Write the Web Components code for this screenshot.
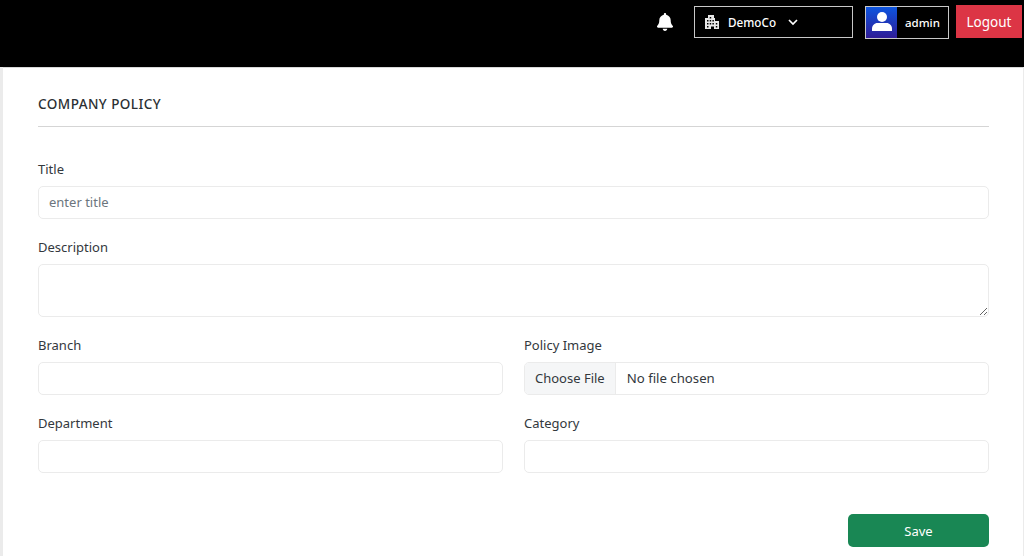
<!DOCTYPE html>
<html>
<head>
<meta charset="utf-8">
<title>Company Policy</title>
<style>
  html, body { margin: 0; height: 100%; overflow: hidden; }
  body { background: #ebebeb; font-family: "Noto Sans", "Open Sans", sans-serif; color: #212529; }
</style>
</head>
<body>
<app-shell>
  <top-bar slot="top">
    <notify-bell></notify-bell>
    <company-select>DemoCo</company-select>
    <user-chip>admin</user-chip>
    <logout-button>Logout</logout-button>
  </top-bar>
  <policy-card heading="COMPANY POLICY">
    <form-field label="Title" wide><text-box placeholder="enter title"></text-box></form-field>
    <form-field label="Description" wide><text-box multiline></text-box></form-field>
    <form-field label="Branch"><text-box></text-box></form-field>
    <form-field label="Policy Image"><file-box></file-box></form-field>
    <form-field label="Department"><text-box></text-box></form-field>
    <form-field label="Category"><text-box></text-box></form-field>
    <save-button slot="actions">Save</save-button>
  </policy-card>
</app-shell>

<script>
// small helper, every element has the same shadow setup
class Base extends HTMLElement {
  constructor() {
    super();
    this.attachShadow({ mode: 'open' });
  }
  connectedCallback() {
    this.shadowRoot.innerHTML = this.render();
  }
}

class AppShell extends Base {
  render() {
    return `
      <style>
        :host { display: flex; flex-direction: column; height: 556px; }
        main { flex: 1; padding: 0 1px 0 3px; min-height: 0; display: flex; }
      </style>
      <slot name="top"></slot>
      <main><slot></slot></main>
    `;
  }
}

class TopBar extends Base {
  render() {
    return `
      <style>
        :host {
          display: flex; align-items: flex-start; justify-content: flex-end;
          height: 67px; box-sizing: border-box; background: #000;
          padding: 5px 2px 0 0; color: #fff; flex: none;
        }
      </style>
      <slot></slot>
    `;
  }
}

class NotifyBell extends Base {
  render() {
    return `
      <style>
        :host { display: block; width: 16px; height: 18px; margin: 8px 21px 0 0; }
        svg { display: block; }
      </style>
      <svg width="16" height="18" viewBox="0 0 448 512" fill="#fff" preserveAspectRatio="none">
        <path d="M224 512c35.300 0 64-28.700 64-64H160c0 35.300 28.700 64 64 64zM439.400 362.300c-19.300-20.800-55.500-52-55.500-154.300 0-77.700-54.500-139.900-128-155.200V32c0-17.700-14.300-32-32-32s-32 14.300-32 32v20.800C118.400 68.100 63.900 130.300 63.900 208c0 102.300-36.200 133.500-55.500 154.300C2.400 368.700 0 376.400 0 384c.1 16.400 13 32 32.100 32h383.800c19.100 0 32-15.600 32.100-32 0-7.600-2.700-15.300-8.600-21.700z"/>
      </svg>
    `;
  }
}

class CompanySelect extends Base {
  render() {
    return `
      <style>
        :host {
          display: flex; align-items: center; box-sizing: border-box;
          width: 159px; height: 32px; margin: 1px 12px 0 0; padding: 0 10px;
          border: 1px solid #c8c8c8; font-size: 11.700px; font-weight: 500; color: #fff;
        }
        .org { margin-right: 9px; display: block; flex: none; }
        .chev { margin-left: 12px; display: block; }
      </style>
      <svg class="org" width="14" height="14" viewBox="0 0 14 14" fill="#e8e8e8">
        <path fill-rule="evenodd" d="M3 0h6v3h1v3h4v8H9v-2.500H6V14H0V3h3zM2 5v1.500h1.500V5zm2.700 0v1.500h1.500V5zm2.700 0v1.500h1.500V5zM2 8v1.500h1.500V8zm2.700 0v1.500h1.500V8zm2.700 0v1.500h1.500V8zM2 11v1.500h1.500V11zm8.800-3v1.500h1.500V8zm0 3v1.500h1.500V11zM4.700 2v1.500h1.500V2z"/>
      </svg>
      <slot></slot>
      <svg class="chev" width="10" height="7" viewBox="0 0 10 7" fill="none" stroke="#fff" stroke-width="1.700">
        <path d="M1 1l4 4 4-4"/>
      </svg>
    `;
  }
}

class UserChip extends Base {
  render() {
    return `
      <style>
        :host {
          display: flex; align-items: center; box-sizing: border-box;
          width: 84px; height: 33px; margin: 1px 7px 0 0;
          border: 1px solid #c8c8c8; font-size: 11.500px; font-weight: 500; color: #fff;
        }
        .pic {
          width: 31px; height: 31px; flex: none; margin-right: 8px;
          background: linear-gradient(180deg, #0d55e0, #2f1c96);
          display: flex; align-items: center; justify-content: center;
        }
        svg { display: block; margin-top: -2px; }
      </style>
      <div class="pic">
        <svg width="20" height="19" viewBox="0 0 20 19" fill="#fff">
          <circle cx="10" cy="5" r="5"/>
          <path d="M0 19v-2.500C0 13.500 2.500 11 5.500 11h9c3 0 5.500 2.500 5.500 5.500V19z"/>
        </svg>
      </div>
      <slot></slot>
    `;
  }
}

class LogoutButton extends Base {
  render() {
    return `
      <style>
        :host {
          display: flex; align-items: center; justify-content: center;
          width: 66px; height: 33px; background: #dc3545; color: #fff;
          font-size: 13.500px;
        }
      </style>
      <slot></slot>
    `;
  }
}

class PolicyCard extends Base {
  render() {
    return `
      <style>
        :host {
          display: block; flex: 1; background: #fff; box-sizing: border-box;
          padding: 27px 34px 0 35px; border-top: 1px solid #d8d8d8;
        }
        h2 {
          margin: 0; padding-bottom: 13px; border-bottom: 1px solid #d5d5d5;
          font-size: 13.500px; line-height: 18px; font-weight: 500; letter-spacing: .45px; color: #2b2f33;
        }
        .grid {
          display: grid; grid-template-columns: 1fr 1fr; column-gap: 21px;
          margin-top: 33px;
        }
        .actions { display: flex; justify-content: flex-end; margin-top: 22px; }
      </style>
      <h2>${this.getAttribute('heading')}</h2>
      <div class="grid"><slot></slot></div>
      <div class="actions"><slot name="actions"></slot></div>
    `;
  }
}

class FormField extends Base {
  render() {
    return `
      <style>
        :host { display: block; margin-bottom: 19px; }
        :host([wide]) { grid-column: 1 / -1; }
        label { display: block; font-size: 13px; line-height: 18px; margin-bottom: 8px; color: #33383d; }
      </style>
      <label>${this.getAttribute('label')}</label>
      <slot></slot>
    `;
  }
}

class TextBox extends Base {
  render() {
    const placeholder = this.getAttribute('placeholder') || '';
    const tag = this.hasAttribute('multiline')
      ? '<textarea rows="2"></textarea>'
      : `<input type="text" placeholder="${placeholder}">`;
    return `
      <style>
        :host { display: block; }
        input, textarea {
          display: block; width: 100%; box-sizing: border-box; height: 33px;
          padding: 0 10px 2px; border: 1px solid #ebebeb; border-radius: 5px;
          background: #fff; font: 13px "Noto Sans", sans-serif; color: #212529; outline: none;
        }
        textarea { height: 53px; resize: vertical; }
        input::placeholder { color: #6c757d; opacity: 1; }
      </style>
      ${tag}
    `;
  }
}

class FileBox extends Base {
  render() {
    return `
      <style>
        :host {
          display: flex; align-items: center; height: 33px; box-sizing: border-box;
          border: 1px solid #ebebeb; border-radius: 5px; overflow: hidden;
          font-size: 13px; color: #33383d;
        }
        .pick {
          height: 100%; box-sizing: border-box; display: flex; align-items: center; padding: 0 10px 2px;
          background: #f5f6f7; border-right: 1px solid #ebebeb; margin-right: 11px;
        }
        .name { font-size: 13.200px; padding-bottom: 2px; }
      </style>
      <span class="pick">Choose File</span>
      <span class="name">No file chosen</span>
    `;
  }
}

class SaveButton extends Base {
  render() {
    return `
      <style>
        :host {
          display: flex; align-items: center; justify-content: center;
          width: 141px; height: 33px; border-radius: 5px;
          background: #198754; color: #fff; font-size: 13px;
        }
      </style>
      <slot></slot>
    `;
  }
}

customElements.define('app-shell', AppShell);
customElements.define('top-bar', TopBar);
customElements.define('notify-bell', NotifyBell);
customElements.define('company-select', CompanySelect);
customElements.define('user-chip', UserChip);
customElements.define('logout-button', LogoutButton);
customElements.define('policy-card', PolicyCard);
customElements.define('form-field', FormField);
customElements.define('text-box', TextBox);
customElements.define('file-box', FileBox);
customElements.define('save-button', SaveButton);
</script>
</body>
</html>
